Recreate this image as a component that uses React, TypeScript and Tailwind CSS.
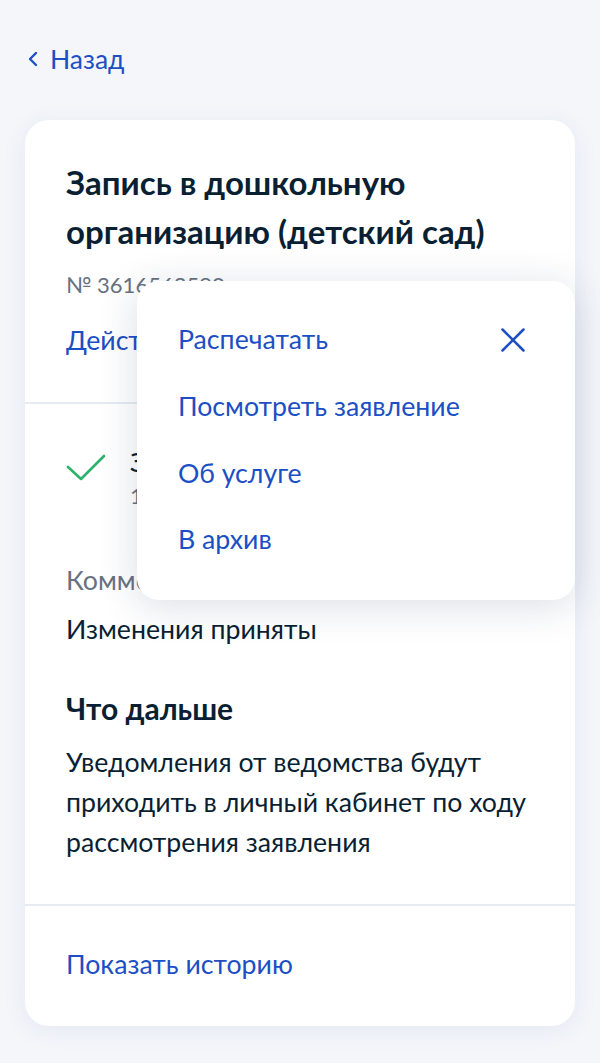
import React from "react";

export default function App() {
  const blue = "text-[#1d4fc4]";
  return (
    <div className="min-h-[1063px] w-[600px] bg-[#f4f6fa] font-['Lato',_'Noto_Sans',_sans-serif] text-[#0b1f33]">
      <div className="px-[25px] pt-[42px]">
        <div className={`flex items-center gap-[10px] h-[34px] pl-[2px] ${blue}`}>
          <svg width="14" height="16" viewBox="0 0 14 16" fill="none" className="ml-[-1px]">
            <path d="M10 2 L4 8 L10 14" stroke="currentColor" strokeWidth="2.4" strokeLinecap="round" strokeLinejoin="round" />
          </svg>
          <span className="text-[26.5px] leading-[32px]">Назад</span>
        </div>

        <div className="relative mt-[44px] rounded-[24px] bg-white shadow-[0_4px_24px_rgba(40,70,140,0.08)]">
          <div className="px-[41px] pt-[38px] pb-[46px] border-b-2 border-[#e6ebf2]">
            <h1 className="text-[33px] leading-[49px] font-bold">
              Запись в дошкольную
              <br />
              организацию (детский сад)
            </h1>
            <div className="mt-[13px] text-[22px] leading-[32px] text-[#66727f]">№ 3616562590</div>
            <div className={`mt-[23px] text-[26.7px] leading-[32px] ${blue}`}>Действия</div>
          </div>

          <div className="px-[41px] pt-[40px]">
            <div className="flex gap-[24px]">
              <svg width="40" height="40" viewBox="0 0 40 40" fill="none" className="mt-[3px] shrink-0">
                <path d="M2 20 L15 32 L38 9" stroke="#2bb36b" strokeWidth="2.6" strokeLinecap="round" strokeLinejoin="round" />
              </svg>
              <div>
                <div className="text-[26.7px] leading-[36px]">Заявление</div>
                <div className="text-[22px] leading-[32px] text-[#66727f]">15.03.2024</div>
              </div>
            </div>

            <div className="mt-[52px] text-[26.7px] leading-[32px] text-[#66727f]">Комментарий</div>
            <div className="mt-[17px] text-[26.7px] leading-[32px]">Изменения приняты</div>

            <div className="mt-[47px] text-[30px] leading-[32px] font-bold">Что дальше</div>
            <div className="mt-[18px] text-[26.7px] leading-[40px] pb-[42px]">
              Уведомления от ведомства будут
              <br />
              приходить в личный кабинет по ходу
              <br />
              рассмотрения заявления
            </div>
          </div>

          <div className="border-t-2 border-[#e6ebf2] px-[41px] pt-[42px] pb-[46px]">
            <div className={`text-[26.7px] leading-[32px] ${blue}`}>Показать историю</div>
          </div>

          <div className="absolute left-[112px] top-[161px] w-[438px] rounded-[22px] bg-white pt-[25px] pb-[27px] pl-[41px] shadow-[0_6px_40px_rgba(30,50,90,0.16)]">
            {["Распечатать", "Посмотреть заявление", "Об услуге", "В архив"].map((t) => (
              <div key={t} className={`flex h-[66.7px] items-center text-[26.7px] leading-[32px] ${blue}`}>
                {t}
              </div>
            ))}
            <svg width="24" height="24" viewBox="0 0 24 24" fill="none" className={`absolute right-[50px] top-[47px] ${blue}`}>
              <path d="M1.5 1.5 L22.5 22.5 M22.5 1.5 L1.5 22.5" stroke="currentColor" strokeWidth="2.5" strokeLinecap="round" />
            </svg>
          </div>
        </div>
      </div>
    </div>
  );
}
